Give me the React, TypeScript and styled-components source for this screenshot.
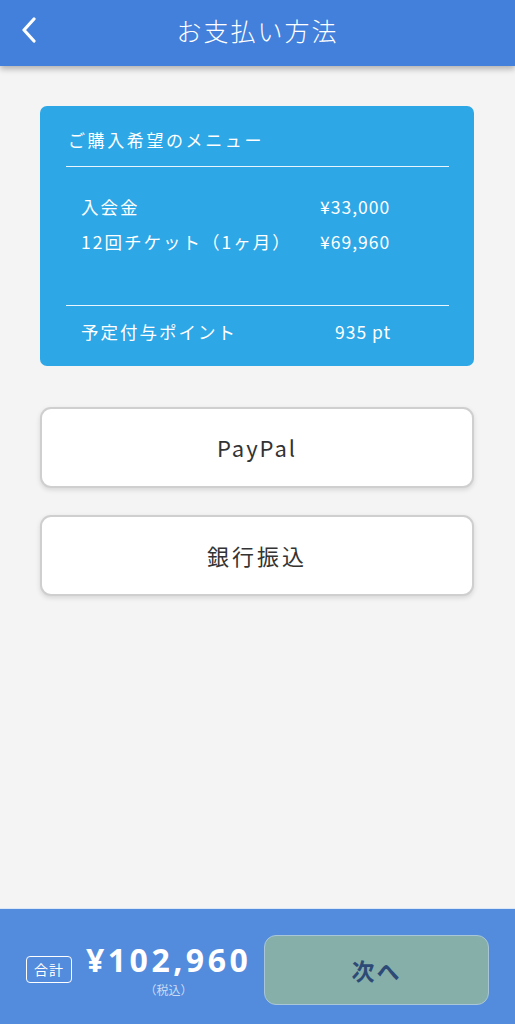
import React from "react";
import styled, { createGlobalStyle } from "styled-components";

const GlobalStyle = createGlobalStyle`
  html, body { margin: 0; padding: 0; background: #f4f4f4; }
  body { font-family: "Noto Sans CJK JP", "Noto Sans", sans-serif; }
  * { box-sizing: border-box; }
`;

const Page = styled.div`
  width: 515px;
  height: 1024px;
  display: flex;
  flex-direction: column;
  background: #f4f4f4;
  overflow: hidden;
`;

const Header = styled.header`
  position: relative;
  z-index: 2;
  height: 66px;
  flex-shrink: 0;
  background: #4380db;
  box-shadow: 0 3px 6px rgba(0, 0, 0, 0.28);
  display: grid;
  grid-template-columns: 60px 1fr 60px;
  align-items: center;
`;

const BackButton = styled.button`
  border: none;
  background: transparent;
  padding: 0 0 6px 20px;
  height: 100%;
  display: flex;
  align-items: center;
  cursor: pointer;
`;

const Title = styled.h1`
  margin: 0 0 6px;
  text-align: center;
  color: #ffffff;
  font-size: 25px;
  font-weight: 300;
  letter-spacing: 2px;
`;

const Main = styled.main`
  flex: 1;
  padding: 40px 41px 0 40px;
  display: flex;
  flex-direction: column;
`;

const MenuCard = styled.section`
  background: #2da7e6;
  border-radius: 7px;
  padding: 19px 25px 22px 26px;
  color: #ffffff;
`;

const CardTitle = styled.h2`
  margin: 0;
  padding: 0 0 11px 2px;
  font-size: 17px;
  font-weight: 400;
  letter-spacing: 2.6px;
  line-height: 30px;
  border-bottom: 1.5px solid rgba(255, 255, 255, 0.9);
`;

const Items = styled.div`
  padding: 27px 0 51px 15px;
  display: flex;
  flex-direction: column;
  gap: 10px;
  border-bottom: 1.5px solid rgba(255, 255, 255, 0.9);
`;

const Row = styled.div<{ $labelWidth: number }>`
  display: grid;
  grid-template-columns: ${(p) => p.$labelWidth}px auto;
  font-size: 17.5px;
  line-height: 25px;
  letter-spacing: 2px;
`;

const Label = styled.span``;
const Value = styled.span`
  letter-spacing: 1px;
`;

const PointsWrap = styled.div`
  padding: 13px 0 0 15px;
`;

const Methods = styled.div`
  margin-top: 41px;
  display: flex;
  flex-direction: column;
  gap: 27px;
`;

const MethodButton = styled.button<{ $spacing?: number }>`
  height: 81px;
  width: 100%;
  background: #ffffff;
  border: 2px solid #cfcfcf;
  border-radius: 11px;
  box-shadow: 0 2px 5px rgba(0, 0, 0, 0.12);
  font-family: "Noto Sans CJK JP", "Noto Sans", sans-serif;
  font-size: 22px;
  color: #333333;
  letter-spacing: ${(p) => p.$spacing ?? 2}px;
  padding-bottom: 2px;
  cursor: pointer;
`;

const Footer = styled.footer`
  height: 116px;
  flex-shrink: 0;
  background: #538bdd;
  border-top: 1px solid #dbe6f6;
  display: flex;
  align-items: center;
  padding: 6px 26px 0 26px;
`;

const TotalBlock = styled.div`
  display: flex;
  align-items: center;
  gap: 14px;
`;

const Badge = styled.span`
  border: 1.5px solid #ffffff;
  border-radius: 4px;
  color: #ffffff;
  font-size: 14px;
  line-height: 25px;
  padding: 0 7px;
  letter-spacing: 1px;
`;

const AmountCol = styled.div`
  display: flex;
  flex-direction: column;
  align-items: center;
`;

const Amount = styled.div`
  color: #ffffff;
  font-family: "Noto Sans", "Liberation Sans", sans-serif;
  font-weight: 700;
  font-size: 32px;
  line-height: 36px;
  letter-spacing: 3.5px;
`;

const TaxNote = styled.div`
  color: #c9dbf4;
  font-size: 12px;
  line-height: 16px;
  margin-top: 4px;
`;

const NextButton = styled.button`
  margin-left: auto;
  width: 225px;
  height: 70px;
  background: #87afaa;
  border: 1.5px solid #a8c6d8;
  border-radius: 12px;
  color: #2d4a77;
  font-family: "Noto Sans CJK JP", "Noto Sans", sans-serif;
  font-size: 23px;
  font-weight: 700;
  letter-spacing: 2px;
  cursor: pointer;
`;

const BackIcon = () => (
  <svg width="18" height="26" viewBox="0 0 18 26">
    <polyline
      points="14,2 4,13 14,24"
      fill="none"
      stroke="#ffffff"
      strokeWidth="3.2"
      strokeLinecap="round"
      strokeLinejoin="round"
    />
  </svg>
);

const items = [
  { label: "入会金", value: "¥33,000" },
  { label: "12回チケット（1ヶ月）", value: "¥69,960" },
];

export default function App() {
  return (
    <>
      <GlobalStyle />
      <Page>
        <Header>
          <BackButton aria-label="戻る">
            <BackIcon />
          </BackButton>
          <Title>お支払い方法</Title>
          <span />
        </Header>
        <Main>
          <MenuCard>
            <CardTitle>ご購入希望のメニュー</CardTitle>
            <Items>
              {items.map((it) => (
                <Row key={it.label} $labelWidth={239}>
                  <Label>{it.label}</Label>
                  <Value>{it.value}</Value>
                </Row>
              ))}
            </Items>
            <PointsWrap>
              <Row $labelWidth={254}>
                <Label>予定付与ポイント</Label>
                <Value>935 pt</Value>
              </Row>
            </PointsWrap>
          </MenuCard>
          <Methods>
            <MethodButton>PayPal</MethodButton>
            <MethodButton $spacing={3}>銀行振込</MethodButton>
          </Methods>
        </Main>
        <Footer>
          <TotalBlock>
            <Badge>合計</Badge>
            <AmountCol>
              <Amount>¥102,960</Amount>
              <TaxNote>（税込）</TaxNote>
            </AmountCol>
          </TotalBlock>
          <NextButton>次へ</NextButton>
        </Footer>
      </Page>
    </>
  );
}
